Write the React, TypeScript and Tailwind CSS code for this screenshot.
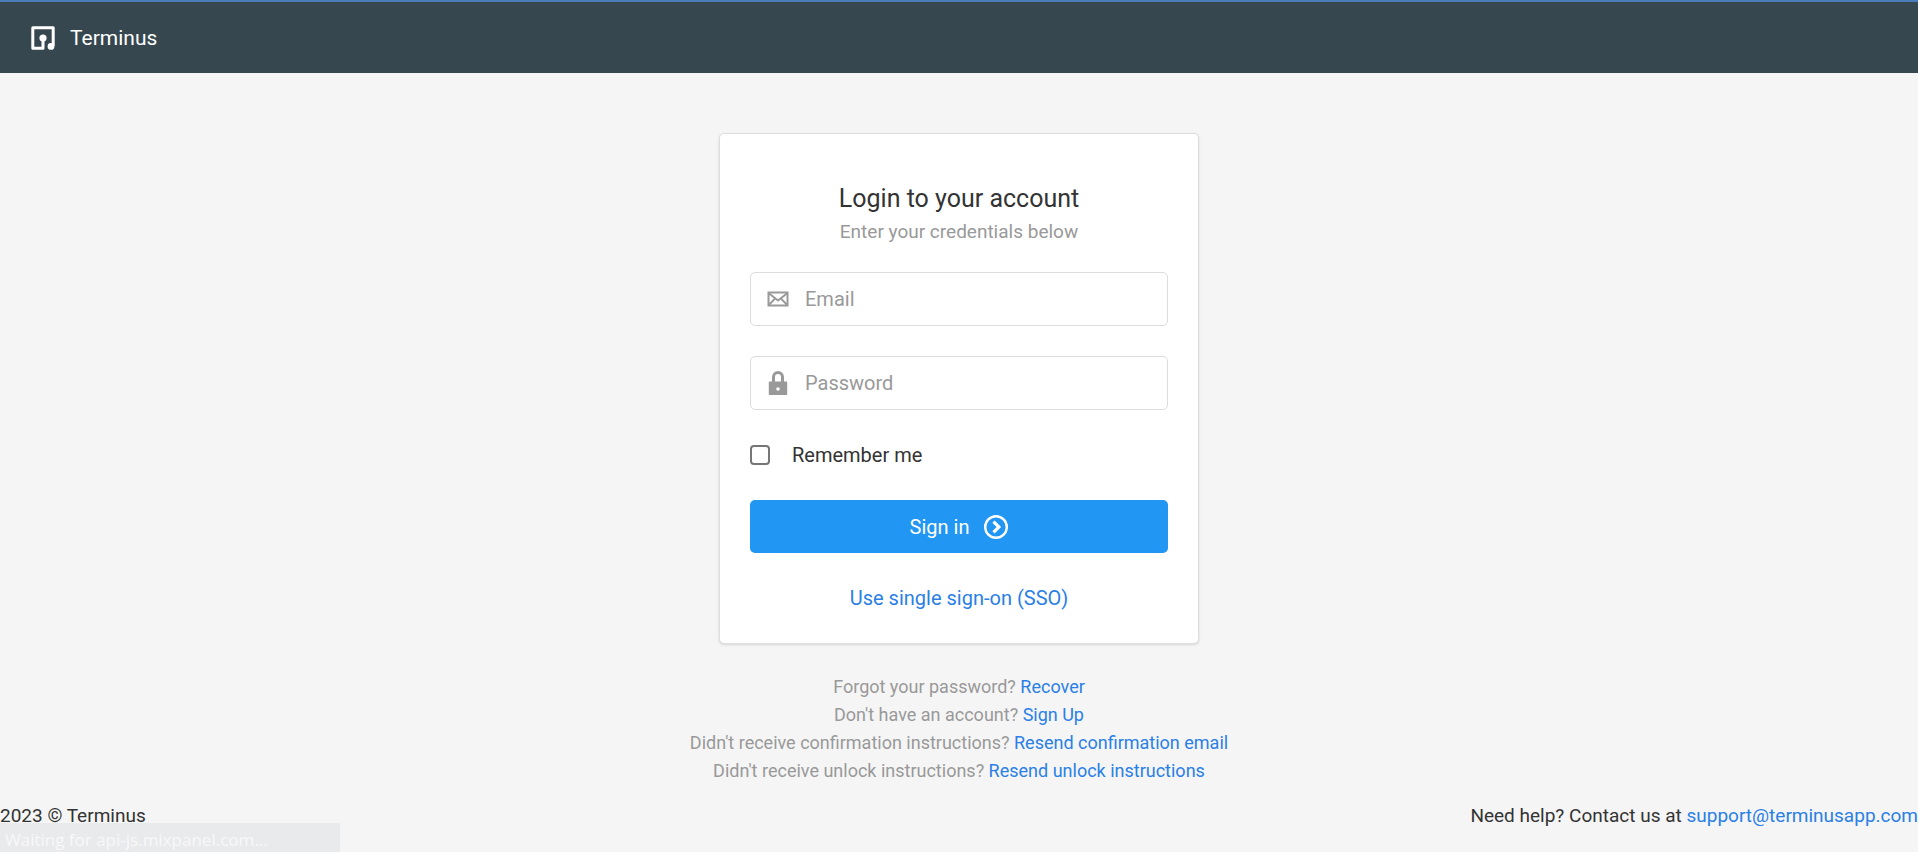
import type { ReactNode } from "react";

const HELP_LINKS = [
  { question: "Forgot your password?", action: "Recover" },
  { question: "Don't have an account?", action: "Sign Up" },
  { question: "Didn't receive confirmation instructions?", action: "Resend confirmation email" },
  { question: "Didn't receive unlock instructions?", action: "Resend unlock instructions" },
];

function Logo() {
  return (
    <svg width="24" height="24" viewBox="0 0 24 24" fill="none" aria-hidden="true">
      <path
        d="M12 11V22.2H1.8V1.8H22.2V20"
        stroke="white"
        strokeWidth="3"
        strokeLinejoin="round"
      />
      <circle cx="12" cy="12" r="3.6" fill="white" />
      <circle cx="20" cy="20.4" r="3.4" fill="white" />
    </svg>
  );
}

function EnvelopeIcon() {
  return (
    <svg width="24" height="24" viewBox="0 0 24 24" fill="none" stroke="#999999" aria-hidden="true">
      <path d="M2.5 5.5H21.5V18.5H2.5Z" strokeWidth="2" />
      <path d="M2.5 6L12 13.5L21.5 6M2.5 18.2L9 11.6M21.5 18.2L15 11.6" strokeWidth="2" />
    </svg>
  );
}

function LockIcon() {
  return (
    <svg width="24" height="24" viewBox="0 0 24 24" fill="none" aria-hidden="true">
      <path d="M7.5 12V6A4.5 4.5 0 0 1 16.5 6V12" stroke="#999999" strokeWidth="3" />
      <path
        fillRule="evenodd"
        clipRule="evenodd"
        d="M3.5 10.5H20.5Q21.2 10.5 21.2 11.2V23.3Q21.2 24 20.5 24H3.5Q2.8 24 2.8 23.3V11.2Q2.8 10.5 3.5 10.5ZM12 16.2A1.8 1.8 0 1 0 12 19.8A1.8 1.8 0 1 0 12 16.2Z"
        fill="#999999"
      />
    </svg>
  );
}

function CircleArrowIcon() {
  return (
    <svg width="24" height="24" viewBox="0 0 24 24" fill="none" stroke="white" aria-hidden="true">
      <circle cx="12" cy="12" r="10.8" strokeWidth="2.4" />
      <path d="M9.5 6.6L14.9 12L9.5 17.4" strokeWidth="3.2" />
    </svg>
  );
}

function Field({ name, type, label, icon }: { name: string; type: string; label: string; icon: ReactNode }) {
  return (
    <div className="mb-[30px] flex h-[54px] items-center gap-[15px] rounded-[5px] border border-[#dddddd] bg-white px-[15px]">
      <label htmlFor={name} aria-label={label}>
        {icon}
      </label>
      <input
        id={name}
        name={name}
        type={type}
        placeholder={label}
        className="min-w-0 flex-1 bg-transparent placeholder:text-[#999999] focus:outline-none"
      />
    </div>
  );
}

export default function App() {
  return (
    <div className="flex min-h-screen flex-col bg-[#f5f5f5] font-['Roboto',sans-serif] text-[20px] leading-[30px] text-[#333333]">
      <header className="border-t-2 border-[#4a7ebb] bg-[#37474f]">
        <a href="#" className="flex items-center gap-[15px] px-[31px] pt-[21px] pb-5 text-[21px] text-white">
          <Logo />
          Terminus
        </a>
      </header>

      <main className="flex flex-col items-center px-4 pt-[60px]">
        <form className="w-full max-w-[480px] rounded-[5px] border border-[#dddddd] bg-white px-[30px] pt-[47px] pb-[30px] shadow-sm">
          <div className="mb-[25px] text-center">
            <h1 className="text-[25px] leading-9">Login to your account</h1>
            <p className="text-[19px] text-[#999999]">Enter your credentials below</p>
          </div>

          <Field name="email" type="email" label="Email" icon={<EnvelopeIcon />} />
          <Field name="password" type="password" label="Password" icon={<LockIcon />} />

          <label className="mb-[30px] flex items-center gap-[22px]">
            <input
              type="checkbox"
              className="h-5 w-5 appearance-none rounded-[4px] border-2 border-[#767676] bg-white checked:bg-[#2196f3]"
            />
            Remember me
          </label>

          <button
            type="submit"
            className="mb-[30px] flex h-[53px] w-full items-center justify-center gap-[15px] rounded-[5px] bg-[#2196f3] text-white"
          >
            Sign in
            <CircleArrowIcon />
          </button>

          <div className="text-center">
            <a href="#" className="text-[#2a80e5]">
              Use single sign-on (SSO)
            </a>
          </div>
        </form>

        <div className="mt-[29px] text-center text-[18px] leading-7 text-[#999999]">
          {HELP_LINKS.map(({ question, action }) => (
            <p key={action}>
              {question}{" "}
              <a href="#" className="text-[#2a80e5]">
                {action}
              </a>
            </p>
          ))}
        </div>
      </main>

      <footer className="mt-4 flex justify-between text-[19px]">
        <span>2023 © Terminus</span>
        <span>
          Need help? Contact us at{" "}
          <a href="mailto:support@terminusapp.com" className="text-[#2a80e5]">
            support@terminusapp.com
          </a>
        </span>
      </footer>

      <div className="fixed bottom-0 left-0 h-[29px] w-[340px] bg-[#e9eaec] px-[5px] font-['Open_Sans',sans-serif] text-[17px] leading-[34px] text-[#f8f8f8]">
        Waiting for api-js.mixpanel.com...
      </div>
    </div>
  );
}
